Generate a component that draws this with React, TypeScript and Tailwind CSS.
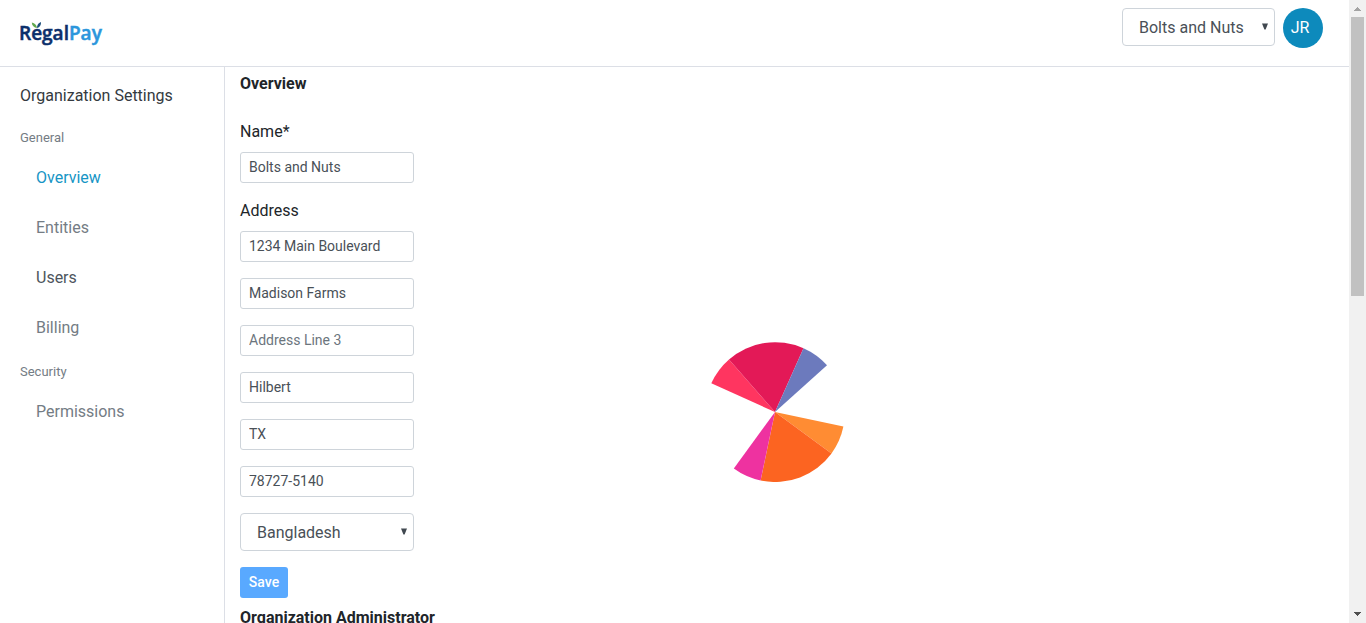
import React, { useState } from "react";

const GENERAL_LINKS = [
  { name: "Overview", color: "text-[#1795c5]" },
  { name: "Entities", color: "text-[#747c84]" },
  { name: "Users", color: "text-[#4d555d]" },
  { name: "Billing", color: "text-[#747c84]" },
];

const ADDRESS_FIELDS = [
  { label: "Address Line 2", value: "Madison Farms" },
  { label: "Address Line 3", value: "" },
  { label: "City", value: "Hilbert" },
  { label: "State", value: "TX" },
  { label: "Postal code", value: "78727-5140" },
];

const INPUT_CLASS =
  "block h-[31px] w-full rounded-[3px] border border-[#ced4da] bg-white px-2 pb-0.5 text-sm text-[#495057] placeholder:text-[#6c757d] focus:outline-2 focus:outline-[#80bdff]";

function Logo() {
  return (
    <a href="#home" aria-label="RegalPay" className="block">
      <svg width="84" height="28" viewBox="0 0 84 28">
        <text x="-1" y="21" fontFamily="'Open Sans', sans-serif" fontWeight="600" fontSize="19" strokeWidth="0.5">
          <tspan fill="#0b2f6b" stroke="#0b2f6b">Regal</tspan>
          <tspan fill="#2b96dc" stroke="#2b96dc">Pay</tspan>
        </text>
        <path d="M11.8 3.4C14.8 4 16.8 6 17 9C14 8.6 12 6.6 11.8 3.4Z" fill="#5fa84c" />
        <path d="M21 3C21.2 6 20 8.2 17 9C16.9 6 18.2 4 21 3Z" fill="#1d4f7c" />
      </svg>
    </a>
  );
}

function SelectBox({ label, options, className }: { label: string; options: string[]; className: string }) {
  return (
    <div className={`relative ${className}`}>
      <select
        aria-label={label}
        className="block h-[38px] w-full appearance-none rounded-[4px] border border-[#ced4da] bg-white pt-0.5 pr-6 pl-4 text-base text-[#495057]"
      >
        {options.map((option) => (
          <option key={option}>{option}</option>
        ))}
      </select>
      <svg className="pointer-events-none absolute top-[15px] right-[7px]" width="6" height="7" viewBox="0 0 6 7" aria-hidden="true">
        <path d="M0 0.5H6L3.6 6.5H2.4Z" fill="#414950" />
      </svg>
    </div>
  );
}

function TextField({ label, initial, id }: { label: string; initial: string; id?: string }) {
  const [value, setValue] = useState(initial);
  return (
    <input
      id={id}
      type="text"
      aria-label={id ? undefined : label}
      placeholder={label}
      value={value}
      onChange={(event) => setValue(event.target.value)}
      className={INPUT_CLASS}
    />
  );
}

function NavLink({ name, color }: { name: string; color: string }) {
  return (
    <a href={`#${name.toLowerCase()}`} className={`flex h-[50px] items-center pl-4 ${color}`}>
      {name}
    </a>
  );
}

function Sidebar() {
  return (
    <nav aria-label="Organization settings" className="w-[225px] shrink-0 border-r border-[#dcdfe6] pt-[17px] pl-5">
      <h1 className="text-base text-[#343a40]">Organization Settings</h1>
      <h2 className="mt-5 mb-[5px] text-[13px] leading-5 text-[#747c84]">General</h2>
      {GENERAL_LINKS.map((link) => (
        <NavLink key={link.name} {...link} />
      ))}
      <h2 className="mt-[9px] mb-[5px] text-[13px] leading-5 text-[#747c84]">Security</h2>
      <NavLink name="Permissions" color="text-[#747c84]" />
    </nav>
  );
}

function Spinner() {
  return (
    <svg
      role="img"
      aria-label="Loading"
      className="absolute top-[275px] left-[480px]"
      width="140"
      height="140"
      viewBox="0 0 140 140"
    >
      <path d="M70 70L6.3 41.3A70 70 0 0 1 24 17.5Z" fill="#ff3560" />
      <path d="M70 70L24 17.5A70 70 0 0 1 98.5 6.2Z" fill="#e31957" />
      <path d="M70 70L98.5 6.2A70 70 0 0 1 122 23.2Z" fill="#6c7abd" />
      <path d="M70 70L138.4 84.6A70 70 0 0 1 126.5 111.5Z" fill="#ff8c33" />
      <path d="M70 70L126.5 111.5A70 70 0 0 1 55.6 138.5Z" fill="#fc6421" />
      <path d="M70 70L55.6 138.5A70 70 0 0 1 28.8 126.6Z" fill="#ee32a0" />
    </svg>
  );
}

function ScrollRail() {
  return (
    <div aria-hidden="true" className="flex w-[17px] shrink-0 flex-col items-center bg-[#f1f1f1]">
      <div className="flex h-[17px] items-center">
        <svg width="7" height="4" viewBox="0 0 7 4" shapeRendering="crispEdges">
          <path d="M3 0H4V1H5V2H6V3H7V4H0V3H1V2H2V1H3Z" fill="#a3a3a3" />
        </svg>
      </div>
      <div className="min-h-0 flex-1">
        <div className="h-[47.4%] w-[13px] bg-[#c1c1c1]" />
      </div>
      <div className="flex h-[17px] items-center pb-0.5">
        <svg width="7" height="4" viewBox="0 0 7 4" shapeRendering="crispEdges">
          <path d="M0 0H7V1H6V2H5V3H4V4H3V3H2V2H1V1H0Z" fill="#505050" />
        </svg>
      </div>
    </div>
  );
}

export default function App() {
  return (
    <div className="flex h-screen overflow-hidden bg-white font-['Roboto',sans-serif] text-base text-[#212529]">
      <div className="flex min-w-0 flex-1 flex-col">
        <header className="flex shrink-0 items-start justify-between border-b border-[#dcdfe6] pt-2 pr-[26px] pb-[18px] pl-5">
          <div className="pt-[11px]">
            <Logo />
          </div>
          <div className="flex gap-2">
            <SelectBox label="Organization" options={["Bolts and Nuts"]} className="w-[153px]" />
            <button type="button" className="flex size-10 items-center justify-center rounded-full bg-[#0d8abc] pr-1.5 text-white">
              JR
            </button>
          </div>
        </header>
        <div className="flex min-h-0 flex-1">
          <Sidebar />
          <main className="relative min-w-0 flex-1 overflow-hidden pt-[5px] pl-[15px]">
            <form className="w-[174px]" onSubmit={(event) => event.preventDefault()}>
              <h2 className="mb-6 font-bold">Overview</h2>
              <label htmlFor="org-name" className="mb-2 block">
                Name*
              </label>
              <TextField id="org-name" label="Name" initial="Bolts and Nuts" />
              <label htmlFor="org-address" className="mt-4 mb-2 block">
                Address
              </label>
              <div className="flex flex-col gap-4">
                <TextField id="org-address" label="Address Line 1" initial="1234 Main Boulevard" />
                {ADDRESS_FIELDS.map((field) => (
                  <TextField key={field.label} label={field.label} initial={field.value} />
                ))}
                <SelectBox label="Country" options={["Bangladesh"]} className="w-full" />
              </div>
              <button
                type="submit"
                className="mt-4 h-[31px] w-12 rounded-[3px] bg-[#59a9ff] pb-0.5 text-center text-sm font-medium text-white"
              >
                Save
              </button>
            </form>
            <h2 className="mt-2 font-bold">Organization Administrator</h2>
            <Spinner />
          </main>
        </div>
      </div>
      <ScrollRail />
    </div>
  );
}
